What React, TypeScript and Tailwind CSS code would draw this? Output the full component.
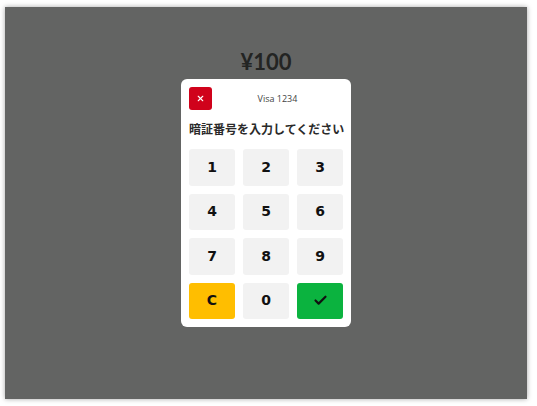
import { Check, X } from 'lucide-react';

const keys = ['1', '2', '3', '4', '5', '6', '7', '8', '9'];

function Key({ label, className }: { label: React.ReactNode; className?: string }) {
  return (
    <button
      className={`h-[36.5px] rounded-[3px] flex items-center justify-center text-[14px] font-bold text-[#111] font-['DejaVu_Sans',sans-serif] ${
        className ?? 'bg-[#f2f2f2]'
      }`}
    >
      {label}
    </button>
  );
}

export default function App() {
  return (
    <div className="w-[537px] h-[406px] bg-white pl-[5px] pt-[7px] font-['Lato','Noto_Sans_CJK_JP',sans-serif]">
      <div className="relative w-[522px] h-[392px] bg-[#636463] shadow-[0_0_5px_rgba(0,0,0,0.35)]">
        <div className="pt-[40px] text-center text-[22px] font-bold text-[#232423] leading-[30px]">
          ¥100
        </div>

        {/* PIN dialog */}
        <div className="absolute left-[176px] top-[72px] w-[170px] rounded-[6px] bg-white p-2">
          <div className="flex items-center">
            <button className="w-[23px] h-[23px] rounded-[3px] bg-[#d0021b] flex items-center justify-center">
              <X className="w-[9px] h-[9px] text-white" strokeWidth={3} />
            </button>
            <span className="flex-1 text-center text-[9px] text-[#444] font-['Open_Sans',sans-serif]">
              Visa 1234
            </span>
          </div>
          <h2 className="mt-[10px] leading-[18px] text-[12px] font-bold text-[#2a2a2a] whitespace-nowrap font-['Noto_Sans_CJK_JP',sans-serif]">
            暗証番号を入力してください
          </h2>
          <div className="mt-[11px] grid grid-cols-3 gap-x-2 gap-y-[8px]">
            {keys.map((k) => (
              <Key key={k} label={k} />
            ))}
            <Key label="C" className="bg-[#ffbe00]" />
            <Key label="0" />
            <Key label={<Check className="w-[15px] h-[15px]" strokeWidth={3.5} />} className="bg-[#0bb33f]" />
          </div>
        </div>
      </div>
    </div>
  );
}
